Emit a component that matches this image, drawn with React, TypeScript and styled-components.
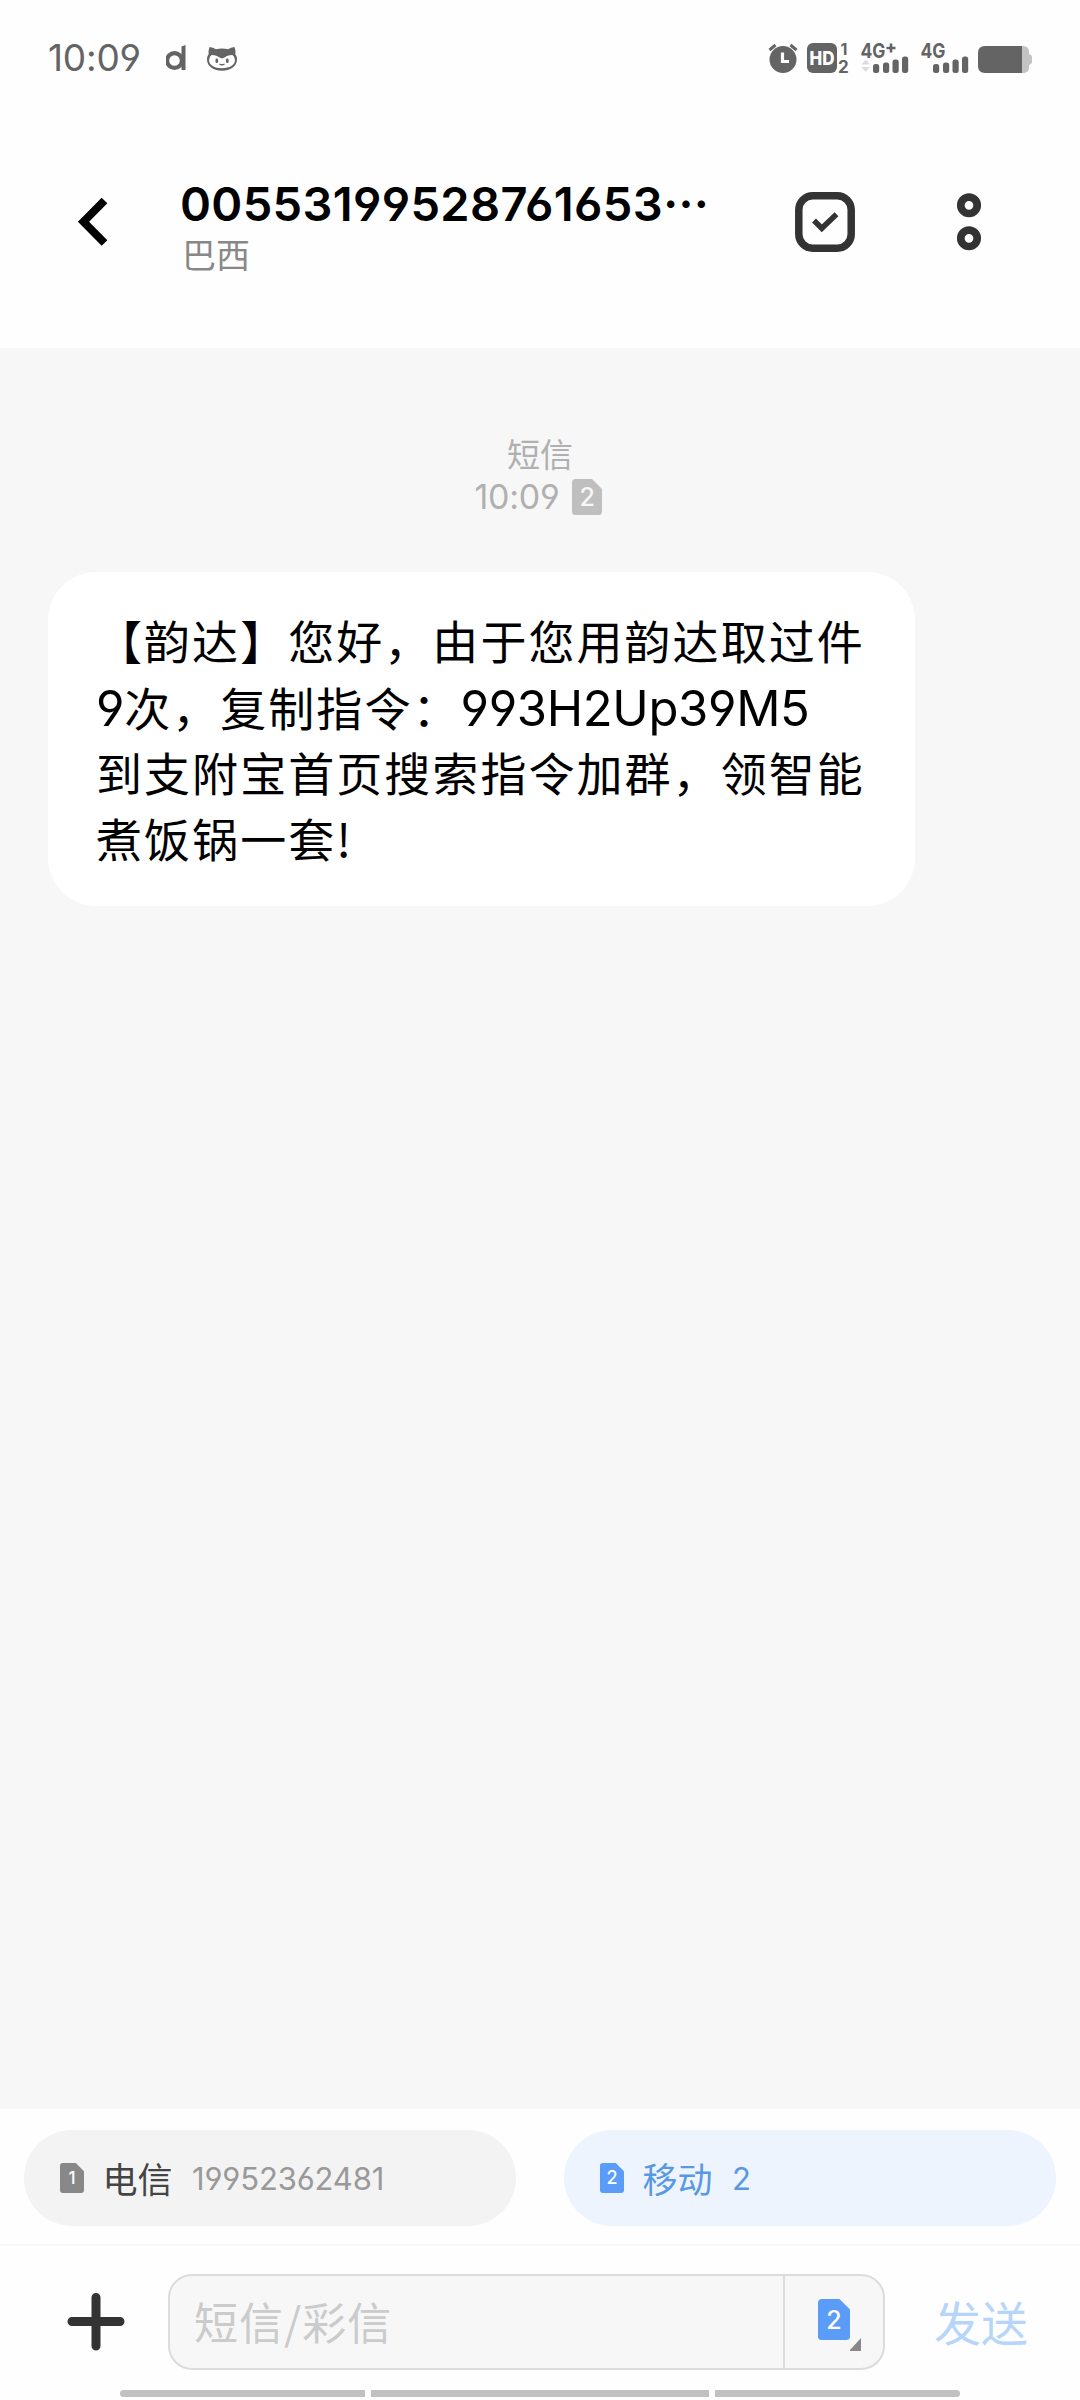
import React from "react";
import styled, { createGlobalStyle } from "styled-components";

const LATIN = `Inter, "Noto Sans CJK SC", sans-serif`;
const HAN = `"Noto Sans CJK SC", sans-serif`;

const GlobalStyle = createGlobalStyle`
  * { box-sizing: border-box; }
  body { margin: 0; background: #fff; font-family: ${LATIN}; font-feature-settings: "cv03", "cv04"; }
  svg { display: block; flex: none; }
  button { border: 0; padding: 0; background: none; font: inherit; color: inherit; }
`;

const Screen = styled.div`
  width: 1080px;
  height: 2400px;
  display: flex;
  flex-direction: column;
  background: #fefefe;
  overflow: hidden;
`;

const StatusBar = styled.div`
  height: 116px;
  padding: 0 48px 0 48px;
  display: flex;
  align-items: center;
  justify-content: space-between;
  color: #646464;
`;

const StatusGroup = styled.div`
  display: flex;
  align-items: center;
`;

const Clock = styled.span`
  width: 118px;
  font-size: 37px;
  line-height: 44px;
  letter-spacing: -0.2px;
`;

const Header = styled.header`
  height: 232px;
  display: flex;
  align-items: flex-start;
  padding: 53px 0 0 72px;
`;

const IconButton = styled.button<{ $top: number }>`
  display: flex;
  flex: none;
  margin-top: ${(p) => p.$top}px;
`;

const Contact = styled.div`
  flex: none;
  width: 684px;
  padding-left: 70px;
`;

const Title = styled.h1`
  margin: 0;
  height: 64px;
  font-size: 47px;
  line-height: 64px;
  font-weight: 600;
  letter-spacing: 0.35px;
  color: #000;
  white-space: nowrap;
`;

const Dots = styled.span`
  font-family: ${HAN};
  font-size: 46px;
  font-weight: 700;
`;

const Region = styled.div`
  padding-left: 2px;
  font-size: 34px;
  line-height: 42px;
  font-family: ${HAN};
  color: #888;
`;

const Thread = styled.main`
  height: 1761px;
  padding: 84px 48px 0;
  background: #f7f7f7;
`;

const Meta = styled.div`
  display: flex;
  flex-direction: column;
  align-items: center;
  height: 140px;
  color: #b0b0b0;
`;

const MetaKind = styled.div`
  font-family: ${HAN};
  font-size: 33px;
  line-height: 42px;
`;

const MetaTime = styled.div`
  display: flex;
  align-items: center;
  gap: 13px;
  margin: 1px 0 0 -3px;
  font-size: 34px;
  line-height: 44px;
  letter-spacing: -0.3px;
`;

const Bubble = styled.div`
  width: 867px;
  height: 334px;
  padding: 34px 48px;
  border-radius: 48px;
  background: #fff;
  color: #000;
  font-family: ${HAN};
  font-size: 46px;
  letter-spacing: 2.05px;
`;

const Line = styled.div<{ $drop?: number }>`
  height: 66px;
  padding-top: ${(p) => p.$drop ?? 0}px;
  line-height: 66px;
  white-space: nowrap;
`;

const Code = styled.span`
  font-family: ${LATIN};
  font-size: 49px;
  line-height: 60px;
  letter-spacing: -0.35px;
`;

const SimBar = styled.div`
  height: 137px;
  padding: 21px 24px 0;
  display: flex;
  gap: 48px;
  border-bottom: 2px solid #f7f7f7;
`;

const SimChoice = styled.button<{ $active?: boolean }>`
  width: 492px;
  height: 96px;
  padding-left: 36px;
  display: flex;
  align-items: center;
  border-radius: 48px;
  background: ${(p) => (p.$active ? "#edf4fe" : "#f3f3f3")};
  color: ${(p) => (p.$active ? "#5a98e2" : "#444")};
`;

const Carrier = styled.span`
  width: 89px;
  padding-left: 18px;
  font-family: ${HAN};
  font-size: 35px;
  line-height: 50px;
  white-space: nowrap;
`;

const SimNumber = styled.span<{ $active?: boolean }>`
  padding-left: 19px;
  font-size: 31px;
  letter-spacing: -0.15px;
  color: ${(p) => (p.$active ? "#5a98e2" : "#999")};
`;

const Composer = styled.div`
  height: 144px;
  padding: 28px 51px 0 67px;
  display: flex;
  align-items: flex-start;
`;

const Field = styled.div`
  width: 717px;
  height: 96px;
  margin-left: 43px;
  display: flex;
  border: 2px solid #dcdcdc;
  border-radius: 24px;
  background: #f7f7f7;
`;

const Placeholder = styled.div`
  width: 613px;
  padding-left: 24px;
  font-family: ${HAN};
  font-size: 44px;
  line-height: 91px;
  letter-spacing: 1px;
  color: #cbcbcb;
`;

const SimPicker = styled.button`
  flex: 1;
  padding: 23px 0 0 33px;
  display: flex;
  border-left: 2px solid #dcdcdc;
`;

const Send = styled.button`
  margin-left: 49px;
  font-family: ${HAN};
  font-size: 47px;
  line-height: 94px;
  color: #b7d5fb;
  white-space: nowrap;
`;

const NavBar = styled.div`
  height: 10px;
  padding: 0 120px 3px;
  display: grid;
  grid-template-columns: 245px 338px 245px;
  gap: 6px;
`;

const NavSegment = styled.div<{ $radius: string }>`
  background: #c1c1c1;
  border-radius: ${(p) => p.$radius};
`;

function SimCard(p: { n: number; w: number; h: number; color: string; size: number; ink?: string }) {
  const { w, h } = p;
  const c = w * 0.3;
  const r = w * 0.12;
  return (
    <svg width={w} height={h} viewBox={`0 0 ${w} ${h}`}>
      <path
        fill={p.color}
        d={`M${r} 0H${w - c - 1}L${w} ${c + 1}V${h - r}Q${w} ${h} ${w - r} ${h}H${r}Q0 ${h} 0 ${h - r}V${r}Q0 0 ${r} 0Z`}
      />
      <text
        x={w / 2}
        y={h / 2 + p.size * 0.36}
        fontSize={p.size}
        fontWeight={500}
        textAnchor="middle"
        fill={p.ink ?? "#fff"}
      >
        {p.n}
      </text>
    </svg>
  );
}

function NotificationIcons() {
  return (
    <svg width="74" height="30" viewBox="166 43 74 30">
      <circle cx="174.5" cy="60.5" r="7.4" fill="none" stroke="#646464" strokeWidth="4.2" />
      <path d="M181.5 46.5l4-1.5v25h-4z" fill="#646464" />
      <path
        d="M209.500 47q3.500.3 6.500 2.200q6-1.200 12 0q3-1.900 6.500-2.200q1.500 4 .8 7q1.700 2.300 1.700 5.500c0 7-7 11.200-15 11.200s-15-4.200-15-11.200q0-3.200 1.700-5.500q-.7-3 .8-7z"
        fill="#646464"
      />
      <path
        d="M211.500 55q3 0 5.500 1q2.500 1.500 5 2.500q2.500-1 5-2.500q2.500-1 5.500-1q2.500 2 2.500 5c0 5-5.500 8.200-13 8.200s-13-3.200-13-8.200q0-3 2.500-5z"
        fill="#fff"
      />
      <rect x="215.500" y="58.500" width="2.600" height="4.500" rx="1.300" fill="#646464" />
      <rect x="226" y="58.500" width="2.600" height="4.500" rx="1.300" fill="#646464" />
      <path d="M219.500 64q2.500 1.600 5 0" stroke="#646464" strokeWidth="1.400" fill="none" />
    </svg>
  );
}

function SystemIcons() {
  const bars = [
    { dx: 0, y: 64 },
    { dx: 10, y: 62.5 },
    { dx: 19.500, y: 59.5 },
    { dx: 29, y: 56.500 },
  ];
  return (
    <svg width="264" height="60" viewBox="768 28 264 60" fill="#646464">
      <circle cx="783" cy="59.500" r="13.500" />
      <path d="M769.500 50l6-5M796.500 50l-6-5" stroke="#646464" strokeWidth="3" />
      <path d="M782.500 52.500v9h6.500" fill="none" stroke="#fff" strokeWidth="3.200" />
      <rect x="807" y="43" width="30" height="30" rx="6" />
      <text x="822" y="64.800" fontSize="19" fontWeight="800" textAnchor="middle" textLength="25" lengthAdjust="spacingAndGlyphs" fill="#fff">HD</text>
      <text x="840.500" y="54.500" fontSize="16" fontWeight="700">1</text>
      <text x="838" y="72.500" fontSize="17" fontWeight="700">2</text>
      <text x="860.500" y="57.500" fontSize="20" fontWeight="700" textLength="25" lengthAdjust="spacingAndGlyphs">4G</text>
      <path d="M886.500 48h9M891 43.500v9" stroke="#646464" strokeWidth="2.600" />
      <path d="M861.500 64.500l4.200-5l4.200 5zM861.500 67l4.200 5l4.200-5z" fill="#dcdcdc" />
      {bars.map((b) => (
        <rect key={b.dx} x={873 + b.dx} y={b.y} width="6.200" height={73 - b.y} rx="2.500" />
      ))}
      <text x="920.500" y="57.500" fontSize="20" fontWeight="700" textLength="25" lengthAdjust="spacingAndGlyphs">4G</text>
      {bars.map((b) => (
        <rect key={b.dx} x={933 + b.dx} y={b.y} width="6.200" height={73 - b.y} rx="2.500" />
      ))}
      <path d="M1020 46h3q6 0 6 6v2q3 1 3 3v5q0 2-3 3v2q0 6-6 6h-3z" fill="#c3c3c3" />
      <path d="M985 46h37v27h-37q-7 0-7-7v-13q0-7 7-7z" />
    </svg>
  );
}

export default function App() {
  return (
    <Screen>
      <GlobalStyle />
      <StatusBar>
        <StatusGroup>
          <Clock>10:09</Clock>
          <NotificationIcons />
        </StatusGroup>
        <SystemIcons />
      </StatusBar>

      <Header>
        <IconButton $top={25} aria-label="返回">
          <svg width="38" height="56" viewBox="72 194 38 56">
            <path d="M104.500 200.500L83.500 221.700L104.500 243" fill="none" stroke="#000" strokeWidth="8" />
          </svg>
        </IconButton>
        <Contact>
          <Title>
            00553199528761653<Dots>…</Dots>
          </Title>
          <Region>巴西</Region>
        </Contact>
        <IconButton $top={22} aria-label="选择">
          <svg width="62" height="62" viewBox="794 191 62 62" fill="none" stroke="#333">
            <rect x="798.800" y="195.800" width="52.400" height="52.400" rx="14" strokeWidth="7.500" />
            <path d="M814 220.500l7.800 7.800l14.700-14" strokeWidth="5.500" />
          </svg>
        </IconButton>
        <IconButton $top={22} aria-label="更多">
          <svg width="176" height="62" viewBox="856 191 176 62" fill="none" stroke="#333" strokeWidth="7.700">
            <circle cx="969" cy="205.300" r="8.200" />
            <circle cx="969" cy="238.300" r="8.200" />
          </svg>
        </IconButton>
      </Header>

      <Thread>
        <Meta>
          <MetaKind>短信</MetaKind>
          <MetaTime>
            10:09
            <SimCard n={2} w={30} h={36} color="#bfbfbf" size={25} ink="#f7f7f7" />
          </MetaTime>
        </Meta>
        <Bubble>
          <Line>【韵达】您好，由于您用韵达取过件</Line>
          <Line $drop={1}>
            <Code>9</Code>次，复制指令：<Code>993H2Up39M5</Code>
          </Line>
          <Line>到支附宝首页搜索指令加群，领智能</Line>
          <Line>煮饭锅一套!</Line>
        </Bubble>
      </Thread>

      <SimBar>
        <SimChoice>
          <SimCard n={1} w={24} h={30} color="#888" size={17} />
          <Carrier>电信</Carrier>
          <SimNumber>19952362481</SimNumber>
        </SimChoice>
        <SimChoice $active>
          <SimCard n={2} w={24} h={30} color="#5a9cf8" size={18} />
          <Carrier>移动</Carrier>
          <SimNumber $active>2</SimNumber>
        </SimChoice>
      </SimBar>

      <Composer>
        <IconButton $top={18} aria-label="添加">
          <svg width="58" height="60" viewBox="67 2292 58 60">
            <path d="M72 2321.500h48M96 2297.500v48.500" stroke="#333" strokeWidth="9" strokeLinecap="round" />
          </svg>
        </IconButton>
        <Field>
          <Placeholder>短信/彩信</Placeholder>
          <SimPicker aria-label="选择SIM卡">
            <SimCard n={2} w={32} h={41} color="#5a9cf8" size={25} />
            <svg width="14" height="54" viewBox="0 0 14 54">
              <path d="M11 39v13h-12z" fill="#888" />
            </svg>
          </SimPicker>
        </Field>
        <Send>发送</Send>
      </Composer>

      <NavBar>
        <NavSegment $radius="4px 0 0 4px" />
        <NavSegment $radius="0" />
        <NavSegment $radius="0 4px 4px 0" />
      </NavBar>
    </Screen>
  );
}
